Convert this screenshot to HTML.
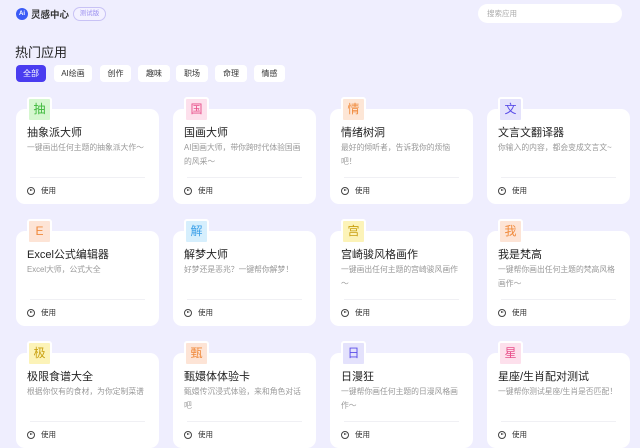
<!DOCTYPE html>
<html><head><meta charset="utf-8"><style>
*{margin:0;padding:0;box-sizing:border-box}
body{width:640px;height:447px;overflow:hidden;background:#efeefe;font-family:"Liberation Sans","Noto Sans CJK SC",sans-serif;position:relative;color:#333}
.logo{position:absolute;left:16px;top:7px;display:flex;align-items:center}
.ai{width:12px;height:12px;border-radius:50%;background:#3b5bf6;color:#fff;font-size:6px;font-weight:bold;text-align:center;line-height:12px}
.lt{font-size:9.5px;margin-left:3px;color:#333;font-weight:bold}
.badge{position:absolute;left:73px;top:7px;width:33px;height:14px;border:1px solid #c8c2f5;border-radius:7px;font-size:6.5px;color:#9a8ff0;text-align:center;line-height:12px;background:#f3f1ff}
.search{position:absolute;left:478px;top:4px;width:144px;height:19px;background:#fff;border-radius:10px;font-size:7.5px;color:#aaa;padding-left:9px;line-height:19px}
h1{position:absolute;left:15px;top:42px;font-size:13px;font-weight:normal;color:#222}
.pill{position:absolute;top:65px;height:17px;background:#fff;border-radius:4px;font-size:8px;text-align:center;line-height:17px;color:#333}
.pill.on{background:#4a3cf0;color:#fff}
.card{position:absolute;width:143px;height:95px;background:#fff;border-radius:9px}
.ic{position:absolute;left:11px;top:-12px;width:25px;height:25px;border:2px solid #fff;border-radius:3px;font-size:12px;text-align:center;line-height:21px}
.t{position:absolute;left:11px;top:15px;font-size:11px;color:#222}
.d{position:absolute;left:11px;top:32px;width:121px;font-size:7.8px;line-height:14px;color:#999}
.hr{position:absolute;left:14px;right:14px;top:68px;height:1px;background:#f0f0f4}
.u{position:absolute;left:11px;top:76px;font-size:7.5px;color:#333;display:flex;align-items:center}
.u i{width:8px;height:8px;border:1px solid #444;border-radius:50%;margin-right:6px;position:relative}
.u i:after{content:"";position:absolute;left:2px;top:1.5px;border-left:3px solid #444;border-top:1.5px solid transparent;border-bottom:1.5px solid transparent}
</style></head><body>
<div class="logo"><div class="ai">Ai</div><span class="lt">灵感中心</span></div>
<div class="badge">测试版</div>
<div class="search">搜索应用</div>
<h1>热门应用</h1>
<div class="pill on" style="left:16px;width:30px">全部</div>
<div class="pill" style="left:54px;width:38px">AI绘画</div>
<div class="pill" style="left:100px;width:31px">创作</div>
<div class="pill" style="left:138px;width:32px">趣味</div>
<div class="pill" style="left:176px;width:32px">职场</div>
<div class="pill" style="left:215px;width:32px">命理</div>
<div class="pill" style="left:254px;width:31px">情感</div>

<div class="card" style="left:16px;top:109px"><div class="ic" style="background:#d6f7d0;color:#3cb83a">抽</div><div class="t">抽象派大师</div><div class="d">一键画出任何主题的抽象派大作～</div><div class="hr"></div><div class="u"><i></i>使用</div></div>
<div class="card" style="left:173px;top:109px"><div class="ic" style="background:#fde0ec;color:#e8508a">国</div><div class="t">国画大师</div><div class="d">AI国画大师，带你跨时代体验国画的风采～</div><div class="hr"></div><div class="u"><i></i>使用</div></div>
<div class="card" style="left:330px;top:109px"><div class="ic" style="background:#fde6d6;color:#f08a3c">情</div><div class="t">情绪树洞</div><div class="d">最好的倾听者，告诉我你的烦恼吧！</div><div class="hr"></div><div class="u"><i></i>使用</div></div>
<div class="card" style="left:487px;top:109px"><div class="ic" style="background:#e4e2fc;color:#5a4de8">文</div><div class="t">文言文翻译器</div><div class="d">你输入的内容，都会变成文言文~</div><div class="hr"></div><div class="u"><i></i>使用</div></div>

<div class="card" style="left:16px;top:231px"><div class="ic" style="background:#fde4d6;color:#f08a3c">E</div><div class="t">Excel公式编辑器</div><div class="d">Excel大师，公式大全</div><div class="hr"></div><div class="u"><i></i>使用</div></div>
<div class="card" style="left:173px;top:231px"><div class="ic" style="background:#d6effd;color:#3ca0e8">解</div><div class="t">解梦大师</div><div class="d">好梦还是恶兆？一键帮你解梦！</div><div class="hr"></div><div class="u"><i></i>使用</div></div>
<div class="card" style="left:330px;top:231px"><div class="ic" style="background:#fcf3b8;color:#c9a010">宫</div><div class="t">宫崎骏风格画作</div><div class="d">一键画出任何主题的宫崎骏风画作～</div><div class="hr"></div><div class="u"><i></i>使用</div></div>
<div class="card" style="left:487px;top:231px"><div class="ic" style="background:#fde4d6;color:#f08a3c">我</div><div class="t">我是梵高</div><div class="d">一键帮你画出任何主题的梵高风格画作～</div><div class="hr"></div><div class="u"><i></i>使用</div></div>

<div class="card" style="left:16px;top:353px"><div class="ic" style="background:#fcf3b8;color:#c9a010">极</div><div class="t">极限食谱大全</div><div class="d">根据你仅有的食材，为你定制菜谱</div><div class="hr"></div><div class="u"><i></i>使用</div></div>
<div class="card" style="left:173px;top:353px"><div class="ic" style="background:#fde4d6;color:#f08a3c">甄</div><div class="t">甄嬛体体验卡</div><div class="d">甄嬛传沉浸式体验，来和角色对话吧</div><div class="hr"></div><div class="u"><i></i>使用</div></div>
<div class="card" style="left:330px;top:353px"><div class="ic" style="background:#e4e2fc;color:#5a4de8">日</div><div class="t">日漫狂</div><div class="d">一键帮你画任何主题的日漫风格画作～</div><div class="hr"></div><div class="u"><i></i>使用</div></div>
<div class="card" style="left:487px;top:353px"><div class="ic" style="background:#fde0ec;color:#e8508a">星</div><div class="t">星座/生肖配对测试</div><div class="d">一键帮你测试星座/生肖是否匹配！</div><div class="hr"></div><div class="u"><i></i>使用</div></div>
</body></html>
